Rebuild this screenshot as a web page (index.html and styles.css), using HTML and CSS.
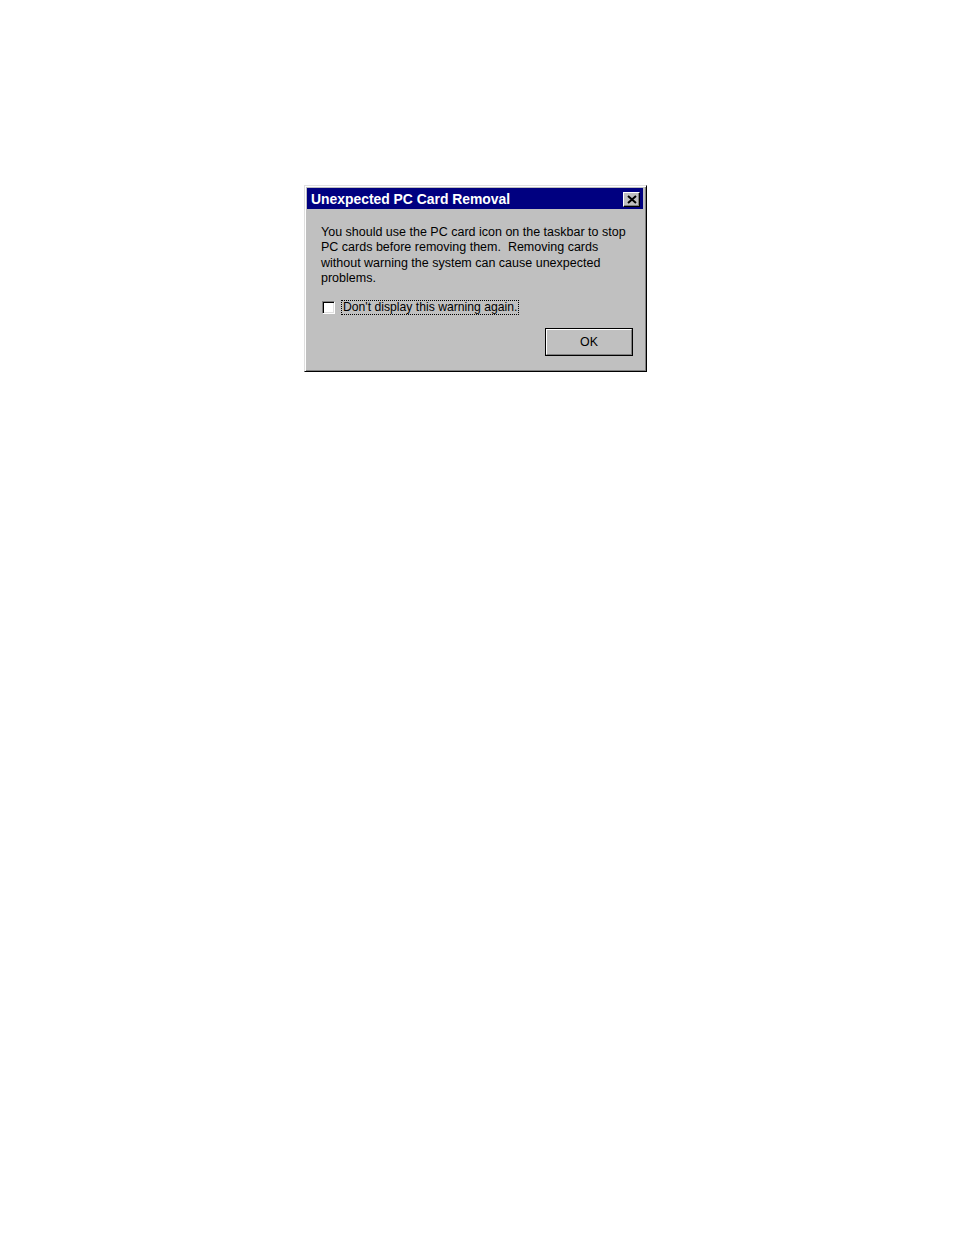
FILE: index.html
```html
<!DOCTYPE html>
<html>
<head>
<meta charset="utf-8">
<link rel="stylesheet" href="styles.css">
</head>
<body>
<div class="dialog">
  <div class="titlebar">
    <span class="title">Unexpected PC Card Removal</span>
    <span class="close"><svg width="10" height="9" viewBox="0 0 10 9"><path d="M1 1 L9 8 M9 1 L1 8" stroke="#000" stroke-width="2" fill="none"/></svg></span>
  </div>
  <div class="content">
    <p class="message">You should use the PC card icon on the taskbar to stop<br>PC cards before removing them.&nbsp; Removing cards<br>without warning the system can cause unexpected<br>problems.</p>
    <div class="check-row">
      <span class="checkbox"></span>
      <span class="label">Don't display this warning again.</span>
    </div>
    <div class="buttons">
      <span class="btn"><span class="btn-inner">OK</span></span>
    </div>
  </div>
</div>
</body>
</html>
```
FILE: styles.css
```css
html, body {
  margin: 0;
  padding: 0;
  background: #ffffff;
}
body {
  font-family: "Liberation Sans", Arial, sans-serif;
}
.dialog {
  margin-left: 304px;
  margin-top: 185px;
  width: 343px;
  height: 187px;
  box-sizing: border-box;
  background: #c0c0c0;
  border-top: 1px solid #dfdfdf;
  border-left: 1px solid #dfdfdf;
  border-right: 1px solid #000000;
  border-bottom: 1px solid #000000;
  box-shadow: inset 1px 1px 0 #ffffff, inset -1px -1px 0 #808080;
  padding: 2px 3px 3px 2px;
  display: flex;
  flex-direction: column;
}
.titlebar {
  height: 21px;
  background: #000080;
  display: flex;
  align-items: center;
  justify-content: space-between;
  padding: 0 3px 0 4px;
}
.title {
  color: #ffffff;
  font-weight: bold;
  font-size: 13.9px;
}
.close {
  width: 17px;
  height: 15px;
  box-sizing: border-box;
  background: #c0c0c0;
  border-top: 1px solid #ffffff;
  border-left: 1px solid #ffffff;
  border-right: 1px solid #000000;
  border-bottom: 1px solid #000000;
  box-shadow: inset -1px -1px 0 #808080;
  display: flex;
  align-items: center;
  justify-content: center;
  margin-top: 1px;
}
.content {
  padding: 16px 0 0 14px;
  color: #000000;
  font-size: 12.5px;
}
.message {
  margin: 0;
  line-height: 15.4px;
}
.check-row {
  display: flex;
  align-items: center;
  margin-top: 13px;
  margin-left: 1px;
}
.checkbox {
  width: 13px;
  height: 13px;
  box-sizing: border-box;
  background: #ffffff;
  border-top: 1px solid #808080;
  border-left: 1px solid #808080;
  border-right: 1px solid #ffffff;
  border-bottom: 1px solid #ffffff;
  box-shadow: inset 1px 1px 0 #000000, inset -1px -1px 0 #dfdfdf;
}
.label {
  margin-left: 6px;
  padding: 0 1px;
  border: 1px dotted #000000;
  line-height: 13px;
  font-size: 12.2px;
}
.buttons {
  display: flex;
  justify-content: flex-end;
  margin-top: 13px;
  padding-right: 10px;
}
.btn {
  width: 88px;
  height: 28px;
  box-sizing: border-box;
  border: 1px solid #000000;
  display: flex;
}
.btn-inner {
  flex: 1;
  border-top: 1px solid #ffffff;
  border-left: 1px solid #ffffff;
  border-right: 1px solid #808080;
  border-bottom: 1px solid #808080;
  display: flex;
  align-items: center;
  justify-content: center;
  font-size: 12.4px;
}
```
